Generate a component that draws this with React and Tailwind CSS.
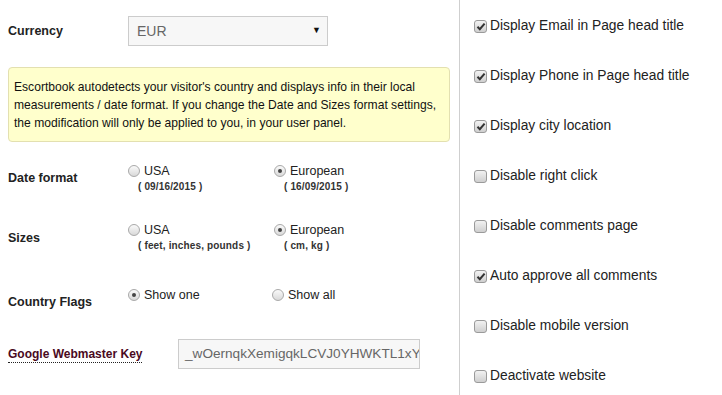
import React from 'react';

const Radio = ({ checked }) => (
  <span className="relative inline-block w-[12px] h-[12px] rounded-full border border-[#a9a9a9] bg-gradient-to-b from-[#fafafa] to-[#d9d9d9] shrink-0">
    {checked && <span className="absolute left-[3px] top-[3px] w-[4px] h-[4px] rounded-full bg-[#444]" />}
  </span>
);

const Checkbox = ({ checked }) => (
  <span className="relative inline-flex items-center justify-center w-[13px] h-[13px] rounded-[3px] border border-[#9a9a9a] bg-gradient-to-b from-[#f2f2f2] to-[#cfcfcf] shrink-0">
    {checked && (
      <svg width="10" height="9" viewBox="0 0 10 9">
        <path d="M1.5 4.8 L3.8 7.2 L8.6 1.6" fill="none" stroke="#333" strokeWidth="2" />
      </svg>
    )}
  </span>
);

const Option = ({ checked, label, sub, width }) => (
  <div className={width}>
    <div className="flex items-center h-[14px] gap-[4px]">
      <Radio checked={checked} />
      <span className="text-[12.5px] leading-[14px]">{label}</span>
    </div>
    {sub && <div className="ml-[10px] mt-[3px] text-[10px] tracking-[0.15px] leading-[12px] font-bold text-[#333]">{sub}</div>}
  </div>
);

const settings = [
  { label: 'Display Email in Page head title', checked: true },
  { label: 'Display Phone in Page head title', checked: true },
  { label: 'Display city location', checked: true },
  { label: 'Disable right click', checked: false },
  { label: 'Disable comments page', checked: false },
  { label: 'Auto approve all comments', checked: true },
  { label: 'Disable mobile version', checked: false },
  { label: 'Deactivate website', checked: false },
];

export default function App() {
  return (
    <div className="w-[722px] h-[395px] bg-white flex font-['Liberation_Sans',Arial,sans-serif] text-[#222] text-[13px] overflow-hidden">
      {/* left column */}
      <div className="w-[460px] h-full border-r border-[#cfcfcf] pt-[16px]">
        <div className="flex items-center h-[30px]">
          <div className="w-[128px] pl-[8px] font-bold text-[12.5px]">Currency</div>
          <div className="w-[200px] h-[30px] border border-[#cccccc] bg-[#f7f7f7] flex items-center justify-between pl-[8px] pr-[6px]">
            <span className="text-[14px] text-[#666]">EUR</span>
            <span className="text-[9px] text-[#111]">▼</span>
          </div>
        </div>

        <div className="ml-[8px] mt-[21px] w-[442px] h-[75px] border border-[#e3e0b0] bg-[#ffffcc] rounded-[4px] pl-[5px] pr-[1px] py-[10px] text-[12.1px] leading-[18px] text-[#111]">
          Escortbook autodetects your visitor's country and displays info in their local measurements / date format. If you change the Date and Sizes format settings, the modification will only be applied to you, in your user panel.
        </div>

        <div className="flex mt-[22px]">
          <div className="w-[128px] pl-[8px] pt-[5px] font-bold text-[12.5px] leading-[18px]">Date format</div>
          <Option checked={false} label="USA" sub="( 09/16/2015 )" width="w-[146px]" />
          <Option checked label="European" sub="( 16/09/2015 )" />
        </div>

        <div className="flex mt-[30px]">
          <div className="w-[128px] pl-[8px] pt-[6px] font-bold text-[12.5px] leading-[18px]">Sizes</div>
          <Option checked={false} label="USA" sub="( feet, inches, pounds )" width="w-[146px]" />
          <Option checked label="European" sub="( cm, kg )" />
        </div>

        <div className="flex mt-[36px]">
          <div className="w-[128px] pl-[8px] pt-[5px] font-bold text-[12.5px] leading-[18px]">Country Flags</div>
          <Option checked label="Show one" width="w-[144px]" />
          <Option checked={false} label="Show all" />
        </div>

        <div className="flex items-center mt-[28px]">
          <div className="w-[178px] pl-[8px]">
            <span className="font-bold text-[12px] text-[#4a0a1e] border-b border-dotted border-[#222] pb-[1px]">Google Webmaster Key</span>
          </div>
          <div className="w-[242px] h-[30px] border border-[#cccccc] bg-[#f7f7f7] flex items-center pl-[6px] overflow-hidden">
            <span className="text-[13.6px] text-[#666] whitespace-nowrap">_wOernqkXemigqkLCVJ0YHWKTL1xY</span>
          </div>
        </div>
      </div>

      {/* right column */}
      <div className="flex-1 pl-[14px] pt-[1px]">
        {settings.map((s, i) => (
          <div key={i} className="h-[50px] flex items-center gap-[3px]">
            <Checkbox checked={s.checked} />
            <span className="text-[13.8px]">{s.label}</span>
          </div>
        ))}
      </div>
    </div>
  );
}
